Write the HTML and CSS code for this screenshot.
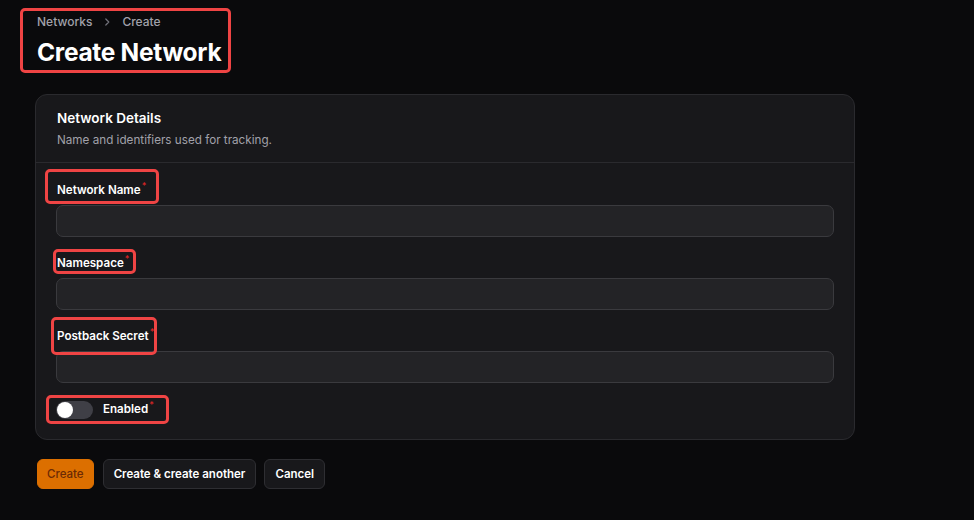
FILE: index.html
```html
<!DOCTYPE html>
<html lang="en">
<head>
<meta charset="utf-8">
<title>Create Network</title>
<link rel="stylesheet" href="styles.css">
</head>
<body>
<main class="page">
  <header class="page-header">
    <nav class="breadcrumbs">
      <span>Networks</span>
      <svg class="crumb-sep" width="12" height="12" viewBox="0 0 20 20" fill="none" stroke="currentColor" stroke-width="2" stroke-linecap="round" stroke-linejoin="round"><path d="M8 5l5 5-5 5"/></svg>
      <span>Create</span>
    </nav>
    <h1 class="page-title">Create Network</h1>
  </header>

  <section class="card">
    <div class="card-header">
      <h2 class="card-title">Network Details</h2>
      <p class="card-desc">Name and identifiers used for tracking.</p>
    </div>
    <div class="card-body">
      <div class="field">
        <label class="label mark-name">Network Name<sup class="req">*</sup></label>
        <div class="input"></div>
      </div>
      <div class="field">
        <label class="label mark-ns">Namespace<sup class="req">*</sup></label>
        <div class="input"></div>
      </div>
      <div class="field">
        <label class="label mark-secret">Postback Secret<sup class="req">*</sup></label>
        <div class="input"></div>
      </div>
      <div class="toggle-row">
        <span class="toggle"><span class="knob"></span></span>
        <span class="label">Enabled<sup class="req">*</sup></span>
      </div>
    </div>
  </section>

  <div class="actions">
    <button class="btn btn-primary">Create</button>
    <button class="btn">Create &amp; create another</button>
    <button class="btn">Cancel</button>
  </div>
</main>
</body>
</html>
```

FILE: styles.css
```css
*, *::before, *::after { box-sizing: border-box; }
html, body { margin: 0; padding: 0; }
body {
  background: #0a0a0c;
  color: #ffffff;
  font-family: Inter, "Noto Sans", sans-serif;
  height: 520px;
  overflow: hidden;
}
.page {
  width: 818px;
  margin-left: 37px;
  display: flex;
  flex-direction: column;
}
.page-header {
  position: relative;
  align-self: flex-start;
  padding-top: 13px;
  display: flex;
  flex-direction: column;
  gap: 7px;
}
.page-header::after {
  content: "";
  position: absolute;
  left: -17px;
  top: 8px;
  width: 211px;
  height: 65px;
  border: 3px solid #ef4444;
  border-radius: 5px;
}
.breadcrumbs {
  display: flex;
  align-items: center;
  gap: 9px;
  font-size: 12px;
  line-height: 17px;
  font-weight: 500;
  color: #a1a1aa;
}
.crumb-sep { color: #71717a; }
.page-title {
  margin: 0;
  font-size: 24.5px;
  line-height: 31px;
  font-weight: 700;
  letter-spacing: -0.3px;
}
.card {
  margin-top: 26px;
  margin-left: -2px;
  background: #18181b;
  border: 1px solid #2a2a2e;
  border-radius: 12px;
}
.card-header {
  padding: 13px 20px 13px 21px;
  border-bottom: 1px solid #2a2a2e;
}
.card-title {
  margin: 0;
  font-size: 13.5px;
  line-height: 20px;
  font-weight: 600;
}
.card-desc {
  margin: 4px 0 0;
  font-size: 11.7px;
  line-height: 17px;
  color: #a1a1aa;
}
.card-body {
  padding: 19px 20px 20px;
  display: flex;
  flex-direction: column;
  gap: 18px;
}
.field {
  display: flex;
  flex-direction: column;
  gap: 6px;
}
.label {
  position: relative;
  align-self: flex-start;
  margin-left: 1px;
  font-size: 11.6px;
  line-height: 17px;
  font-weight: 600;
  color: #ffffff;
}
.req {
  color: #dc2626;
  font-size: 9px;
  line-height: 0;
  margin-left: 1px;
  font-weight: 500;
}
.mark-name::after,
.mark-ns::after,
.mark-secret::after,
.toggle-row::after {
  content: "";
  position: absolute;
  border: 3px solid #ef4444;
  border-radius: 5px;
}
.mark-name::after { left: -12px; top: -13px; width: 114px; height: 35px; }
.mark-ns::after { left: -4px; top: -6px; width: 83px; height: 25px; }
.mark-secret::after { left: -6px; top: -11px; width: 106px; height: 38px; }
.input {
  height: 32px;
  background: #232326;
  border: 1px solid #3a3a3e;
  border-radius: 7px;
}
.toggle-row {
  position: relative;
  align-self: flex-start;
  display: flex;
  align-items: center;
  gap: 10px;
  height: 18px;
}
.toggle-row .label { margin-left: 0; }
.toggle-row::after { left: -10px; top: -6px; width: 123px; height: 29px; }
.toggle {
  width: 37px;
  height: 18px;
  border-radius: 9px;
  background: #3f3f46;
  display: flex;
  align-items: center;
  padding-left: 1px;
}
.knob {
  width: 16px;
  height: 16px;
  border-radius: 50%;
  background: #ffffff;
}
.actions {
  margin-top: 19px;
  display: flex;
  gap: 8px;
}
.btn {
  height: 30px;
  padding: 0 10px;
  border-radius: 6px;
  border: 1px solid #2e2e32;
  background: #18181b;
  color: #ffffff;
  font-family: Inter, "Noto Sans", sans-serif;
  font-size: 11.5px;
  font-weight: 600;
}
.btn-primary {
  background: #dc6f00;
  border-color: #dc6f00;
  color: #6b2a05;
  font-weight: 500;
  padding: 0 9px;
  margin-right: 1px;
}
```
